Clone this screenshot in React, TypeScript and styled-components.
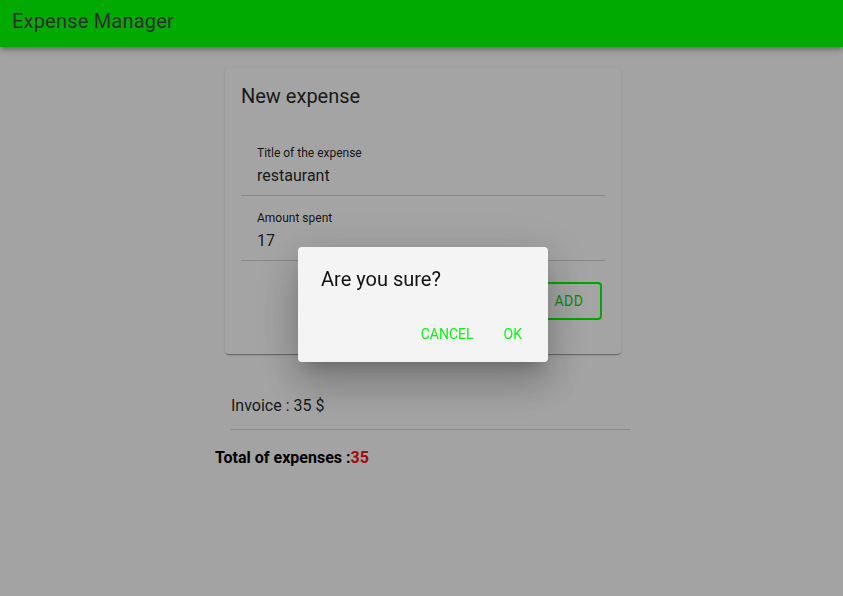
import React from "react";
import styled, { createGlobalStyle } from "styled-components";

const Global = createGlobalStyle`
  html, body { margin: 0; padding: 0; }
  body {
    background: #fdfdfd;
    font-family: Roboto, "Noto Sans", "Liberation Sans", sans-serif;
    color: rgba(0, 0, 0, 0.87);
  }
`;

const Page = styled.div`
  min-height: 596px;
`;

const Header = styled.header`
  position: relative;
  z-index: 20;
  height: 47px;
  background: #00aa00;
  box-shadow: 0 2px 4px -1px rgba(0,0,0,0.2), 0 4px 5px 0 rgba(0,0,0,0.14), 0 1px 10px 0 rgba(0,0,0,0.12);
  display: flex;
  align-items: center;
  padding: 0 12px;
  box-sizing: border-box;
`;

const AppTitle = styled.h1`
  margin: 0;
  font-size: 20px;
  font-weight: 400;
  letter-spacing: 0.2px;
  line-height: 24px;
  color: #2c2c2c;
  margin-top: -6px;
`;

const Main = styled.main`
  display: flex;
  flex-direction: column;
  padding: 21px 0 0 215px;
`;

const Card = styled.section`
  width: 396px;
  margin-left: 10px;
  background: #ffffff;
  border-radius: 4px;
  box-shadow: 0 2px 1px -1px rgba(0,0,0,0.2), 0 1px 1px 0 rgba(0,0,0,0.14), 0 1px 3px 0 rgba(0,0,0,0.12);
  padding: 16px;
  box-sizing: border-box;
`;

const CardTitle = styled.h2`
  margin: 0 0 23px;
  font-size: 20px;
  font-weight: 400;
  line-height: 24px;
`;

const Field = styled.div`
  padding: 14px 16px 7px;
  border-bottom: 1px solid rgba(0,0,0,0.16);
`;

const Label = styled.div`
  font-size: 12px;
  line-height: 16px;
  color: rgba(0,0,0,0.9);
`;

const Value = styled.div`
  margin-top: 3px;
  font-size: 16px;
  line-height: 24px;
  color: rgba(0,0,0,0.87);
`;

const Actions = styled.div`
  display: flex;
  justify-content: flex-end;
  padding: 21px 3px 18px 0;
`;

const OutlineButton = styled.button`
  font-family: inherit;
  font-size: 14px;
  font-weight: 400;
  letter-spacing: 0.5px;
  color: #12d812;
  background: transparent;
  border: 2px solid #00ff00;
  border-radius: 4px;
  height: 38px;
  width: 66px;
  padding: 0;
  text-transform: uppercase;
`;

const InvoiceRow = styled.div`
  width: 400px;
  margin: 40px 0 0 16px;
  padding: 0 0 11px;
  border-bottom: 1px solid rgba(0,0,0,0.16);
  font-size: 16px;
  line-height: 24px;
`;

const Total = styled.p`
  margin: 16px 0 0;
  font-size: 16px;
  font-weight: 700;
  line-height: 24px;
  color: #000;
`;

const Amount = styled.span`
  color: #ff1010;
`;

const Backdrop = styled.div`
  position: fixed;
  inset: 0;
  z-index: 10;
  background: rgba(0, 0, 0, 0.355);
`;

const Dialog = styled.div`
  position: fixed;
  z-index: 30;
  left: 298px;
  top: 247px;
  width: 250px;
  box-sizing: border-box;
  background: #f4f4f4;
  border-radius: 4px;
  padding: 20px 18px 12px 23px;
  box-shadow: 0 11px 15px -7px rgba(0,0,0,0.2), 0 24px 38px 3px rgba(0,0,0,0.14), 0 9px 46px 8px rgba(0,0,0,0.12);
  display: flex;
  flex-direction: column;
`;

const DialogTitle = styled.h2`
  margin: 0;
  font-size: 20px;
  font-weight: 400;
  line-height: 24px;
  color: #111;
`;

const DialogActions = styled.div`
  margin-top: 27px;
  display: flex;
  justify-content: flex-end;
  gap: 14px;
`;

const TextButton = styled.button`
  font-family: inherit;
  font-size: 14px;
  font-weight: 400;
  letter-spacing: 0;
  line-height: 20px;
  padding: 6px 8px;
  background: transparent;
  border: none;
  color: #11f011;
  text-transform: uppercase;
`;

export default function App() {
  return (
    <Page>
      <Global />
      <Header>
        <AppTitle>Expense Manager</AppTitle>
      </Header>
      <Main>
        <Card>
          <CardTitle>New expense</CardTitle>
          <Field>
            <Label>Title of the expense</Label>
            <Value>restaurant</Value>
          </Field>
          <Field>
            <Label>Amount spent</Label>
            <Value>17</Value>
          </Field>
          <Actions>
            <OutlineButton>Add</OutlineButton>
          </Actions>
        </Card>
        <InvoiceRow>Invoice : 35 $</InvoiceRow>
        <Total>
          Total of expenses :<Amount>35</Amount>
        </Total>
      </Main>
      <Backdrop />
      <Dialog role="dialog">
        <DialogTitle>Are you sure?</DialogTitle>
        <DialogActions>
          <TextButton>Cancel</TextButton>
          <TextButton>OK</TextButton>
        </DialogActions>
      </Dialog>
    </Page>
  );
}
